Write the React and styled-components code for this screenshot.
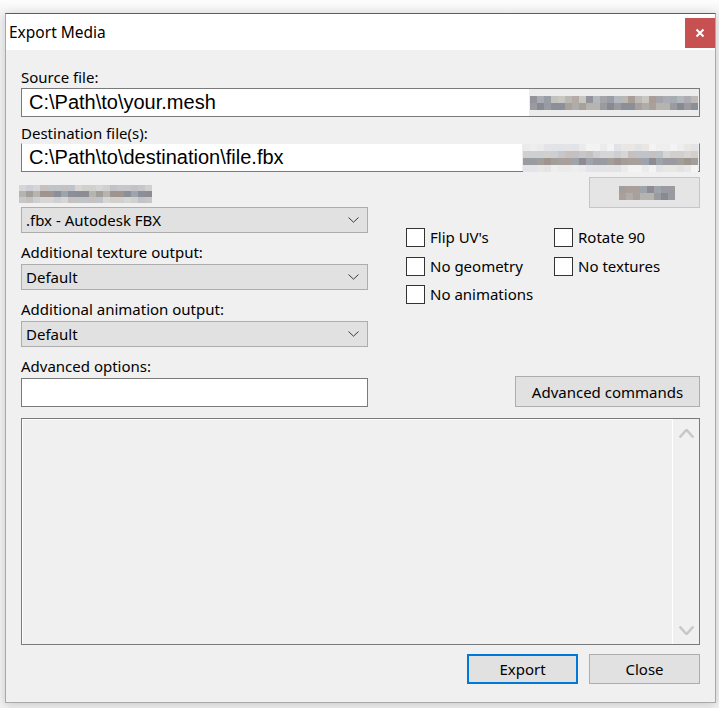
import React from "react";
import styled, { createGlobalStyle } from "styled-components";

const GlobalStyle = createGlobalStyle`
  html, body {
    margin: 0;
    padding: 0;
    background: #f4f4f4;
  }
  body {
    font-family: "Noto Sans", "Segoe UI", sans-serif;
    font-size: 15px;
    color: #000;
  }
`;

const Page = styled.div`
  width: 719px;
  height: 708px;
  padding: 13px 0 0 5px;
  box-sizing: border-box;
  background: linear-gradient(#fdfdfd, #f3f3f3 14px);
`;

const Window = styled.div`
  width: 711px;
  height: 690px;
  box-sizing: border-box;
  background: #f0f0f0;
  border: 1px solid #a9a9a9;
  border-top-color: #5e5e5e;
  box-shadow: 0 2px 10px rgba(0, 0, 0, 0.18);
  display: flex;
  flex-direction: column;
`;

const TitleBar = styled.div`
  height: 36px;
  flex: none;
  background: #fff;
  display: flex;
  align-items: center;
  justify-content: space-between;
  padding-left: 3px;
`;

const Title = styled.span`
  font-size: 15.5px;
  line-height: 20px;
`;

const CloseX = styled.div`
  width: 30px;
  height: 30px;
  margin-top: 1px;
  background: #c75050;
  display: flex;
  align-items: center;
  justify-content: center;
`;

const Body = styled.div`
  flex: 1;
  display: flex;
  flex-direction: column;
  padding: 0 15px;
`;

const Label = styled.div`
  line-height: 20px;
  margin-top: ${(p) => p.$mt ?? 9}px;
  margin-bottom: ${(p) => p.$mb ?? 2}px;
  white-space: nowrap;
`;

const PathBox = styled.div`
  height: 29px;
  box-sizing: border-box;
  border: 1px solid #7a7a7a;
  border-top-color: ${(p) => (p.$hideTop ? "#f0f0f0" : "#7a7a7a")};
  background: #fff;
  display: flex;
  align-items: stretch;
`;

const PathText = styled.div`
  flex: 1;
  font-family: "Liberation Sans", Arial, sans-serif;
  font-size: 20px;
  line-height: 27px;
  padding-left: 7px;
  white-space: nowrap;
  overflow: hidden;
`;

const BlurSlot = styled.div`
  background: ${(p) => p.$bg || "#ececec"};
  display: flex;
  align-items: center;
  padding: ${(p) => p.$pt || 0}px 1px 0;
  margin-left: ${(p) => p.$ml || 0}px;
`;

const MosaicGrid = styled.div`
  display: grid;
  grid-template-columns: repeat(${(p) => p.$cols}, ${(p) => p.$cell}px);
  grid-auto-rows: ${(p) => p.$rowH}px;
`;

const Cell = styled.span.attrs((p) => ({ style: { background: p.$c } }))`
  display: block;
`;

const TopRow = styled.div`
  margin-top: 5px;
  height: 30px;
  display: flex;
  justify-content: space-between;
  align-items: stretch;
`;

const GhostButton = styled.div`
  width: 111px;
  height: 31px;
  box-sizing: border-box;
  border: 1px solid #c6c6c6;
  background: #e5e5e5;
  display: flex;
  align-items: center;
  justify-content: center;
  padding-left: 4px;
`;

const Options = styled.div`
  display: grid;
  grid-template-columns: 347px 1fr;
`;

const LeftCol = styled.div`
  display: flex;
  flex-direction: column;
`;

const RightCol = styled.div`
  display: flex;
  flex-direction: column;
`;

const Combo = styled.div`
  height: 26px;
  box-sizing: border-box;
  border: 1px solid #adadad;
  background: #e1e1e1;
  display: flex;
  align-items: center;
  justify-content: space-between;
  padding: 0 8px 0 4px;
  line-height: 20px;
`;

const TextField = styled.div`
  height: 29px;
  box-sizing: border-box;
  border: 1px solid #7a7a7a;
  background: #fff;
`;

const Checks = styled.div`
  margin-top: 21px;
  padding-left: 38px;
  display: grid;
  grid-template-columns: 148px 1fr;
  grid-auto-rows: 19px;
  row-gap: 9.5px;
`;

const CheckItem = styled.label`
  display: flex;
  align-items: center;
  gap: 5px;
  white-space: nowrap;
  line-height: 19px;
`;

const Box = styled.span`
  width: 19px;
  height: 19px;
  box-sizing: border-box;
  border: 1px solid #333;
  background: #fff;
  flex: none;
`;

const Button = styled.button`
  font-family: "Noto Sans", "Segoe UI", sans-serif;
  font-size: 15px;
  color: #000;
  width: ${(p) => p.$w || 111}px;
  height: ${(p) => p.$h || 30}px;
  box-sizing: border-box;
  background: #e1e1e1;
  border: ${(p) => (p.$primary ? "2px solid #0078d7" : "1px solid #adadad")};
  padding: 0;
  line-height: 20px;
`;

const AdvancedButton = styled(Button)`
  margin-top: auto;
  align-self: flex-end;
`;

const Log = styled.div`
  margin-top: 11px;
  height: 227px;
  box-sizing: border-box;
  border: 1px solid #7a7a7a;
  display: flex;
`;

const LogArea = styled.div`
  flex: 1;
  border-top: 1px solid #fff;
  border-left: 1px solid #fff;
`;

const ScrollBar = styled.div`
  width: 26px;
  border-left: 1px solid #fff;
  display: flex;
  flex-direction: column;
  justify-content: space-between;
  align-items: center;
  padding: 10px 0 9px;
`;

const Actions = styled.div`
  margin-top: 9px;
  display: flex;
  justify-content: flex-end;
  gap: 11px;
`;

const Chevron = ({ up, color = "#3a3a3a", w = 11, h = 6, sw = 1 }) => (
  <svg width={w} height={h} viewBox={`0 0 ${w} ${h}`}>
    <polyline
      points={
        up
          ? `0.5,${h - 0.5} ${w / 2},0.8 ${w - 0.5},${h - 0.5}`
          : `0.5,0.5 ${w / 2},${h - 0.8} ${w - 0.5},0.5`
      }
      fill="none"
      stroke={color}
      strokeWidth={sw}
    />
  </svg>
);

const tones = {
  d: ["#a6a4ab", "#bab8b3", "#94929b", "#c4c2bd", "#aeacb3", "#a89d99",
    "#b3b8bf", "#c8c7c2", "#999da6", "#b4aaa6", "#a7acb2", "#bdb9b6"],
  k: ["#8e8c93", "#a29f9b", "#8a8f98", "#b0aca8", "#9a9aa1", "#a0948f",
    "#9ea4ab", "#b6b4af", "#878a92", "#aaa09b"],
  m: ["#c6c6cb", "#d2d0cc", "#c0c3c8", "#d6d6d6", "#c6c1be", "#ccd0d4"],
  l: ["#e4e4e8", "#eeeeee", "#e9e7e4", "#f3f3f3", "#e1e3e6", "#ebebeb"],
};

const pick = (list, i, seed) => list[(i * 7 + seed * 13 + ((i * i) % 5)) % list.length];

const Mosaic = ({ cols, rows, cell = 7, rowH = 7, seed = 1 }) => (
  <MosaicGrid $cols={cols} $cell={cell} $rowH={rowH}>
    {rows.flatMap((tone, r) =>
      Array.from({ length: cols }, (_, i) => (
        <Cell key={`${r}-${i}`} $c={pick(tones[tone], i + r * 3, seed + r)} />
      ))
    )}
  </MosaicGrid>
);

const CheckBox = ({ label }) => (
  <CheckItem>
    <Box />
    {label}
  </CheckItem>
);

const ComboBox = ({ value }) => (
  <Combo>
    <span>{value}</span>
    <Chevron />
  </Combo>
);

export default function App() {
  return (
    <Page>
      <GlobalStyle />
      <Window>
        <TitleBar>
          <Title>Export Media</Title>
          <CloseX>
            <svg width="10" height="10" viewBox="0 0 10 10">
              <path d="M1.5 1.5 L8.5 8.5 M8.5 1.5 L1.5 8.5" stroke="#fff" strokeWidth="2" />
            </svg>
          </CloseX>
        </TitleBar>
        <Body>
          <Label $mt={17} $mb={1}>Source file:</Label>
          <PathBox>
            <PathText>C:\Path\to\your.mesh</PathText>
            <BlurSlot>
              <Mosaic cols={24} rows={["d", "k"]} seed={2} />
            </BlurSlot>
          </PathBox>

          <Label $mt={6} $mb={0}>Destination file(s):</Label>
          <PathBox $hideTop>
            <PathText>C:\Path\to\destination\file.fbx</PathText>
            <BlurSlot>
              <Mosaic cols={25} rows={["l", "m", "k", "l"]} seed={5} />
            </BlurSlot>
          </PathBox>

          <TopRow>
            <BlurSlot $bg="transparent" $ml={-3} $pt={4}>
              <Mosaic cols={19} rows={["m", "k", "m"]} rowH={6} seed={3} />
            </BlurSlot>
            <GhostButton>
              <Mosaic cols={8} rows={["k", "k"]} seed={7} />
            </GhostButton>
          </TopRow>

          <Options>
            <LeftCol>
              <ComboBox value=".fbx - Autodesk FBX" />
              <Label>Additional texture output:</Label>
              <ComboBox value="Default" />
              <Label>Additional animation output:</Label>
              <ComboBox value="Default" />
              <Label>Advanced options:</Label>
              <TextField />
            </LeftCol>
            <RightCol>
              <Checks>
                <CheckBox label="Flip UV's" />
                <CheckBox label="Rotate 90" />
                <CheckBox label="No geometry" />
                <CheckBox label="No textures" />
                <CheckBox label="No animations" />
              </Checks>
              <AdvancedButton $w={185} $h={31}>Advanced commands</AdvancedButton>
            </RightCol>
          </Options>

          <Log>
            <LogArea />
            <ScrollBar>
              <Chevron up color="#c8c8c8" w={15} h={9} sw={2.5} />
              <Chevron color="#c8c8c8" w={15} h={9} sw={2.5} />
            </ScrollBar>
          </Log>

          <Actions>
            <Button $primary>Export</Button>
            <Button>Close</Button>
          </Actions>
        </Body>
      </Window>
    </Page>
  );
}
